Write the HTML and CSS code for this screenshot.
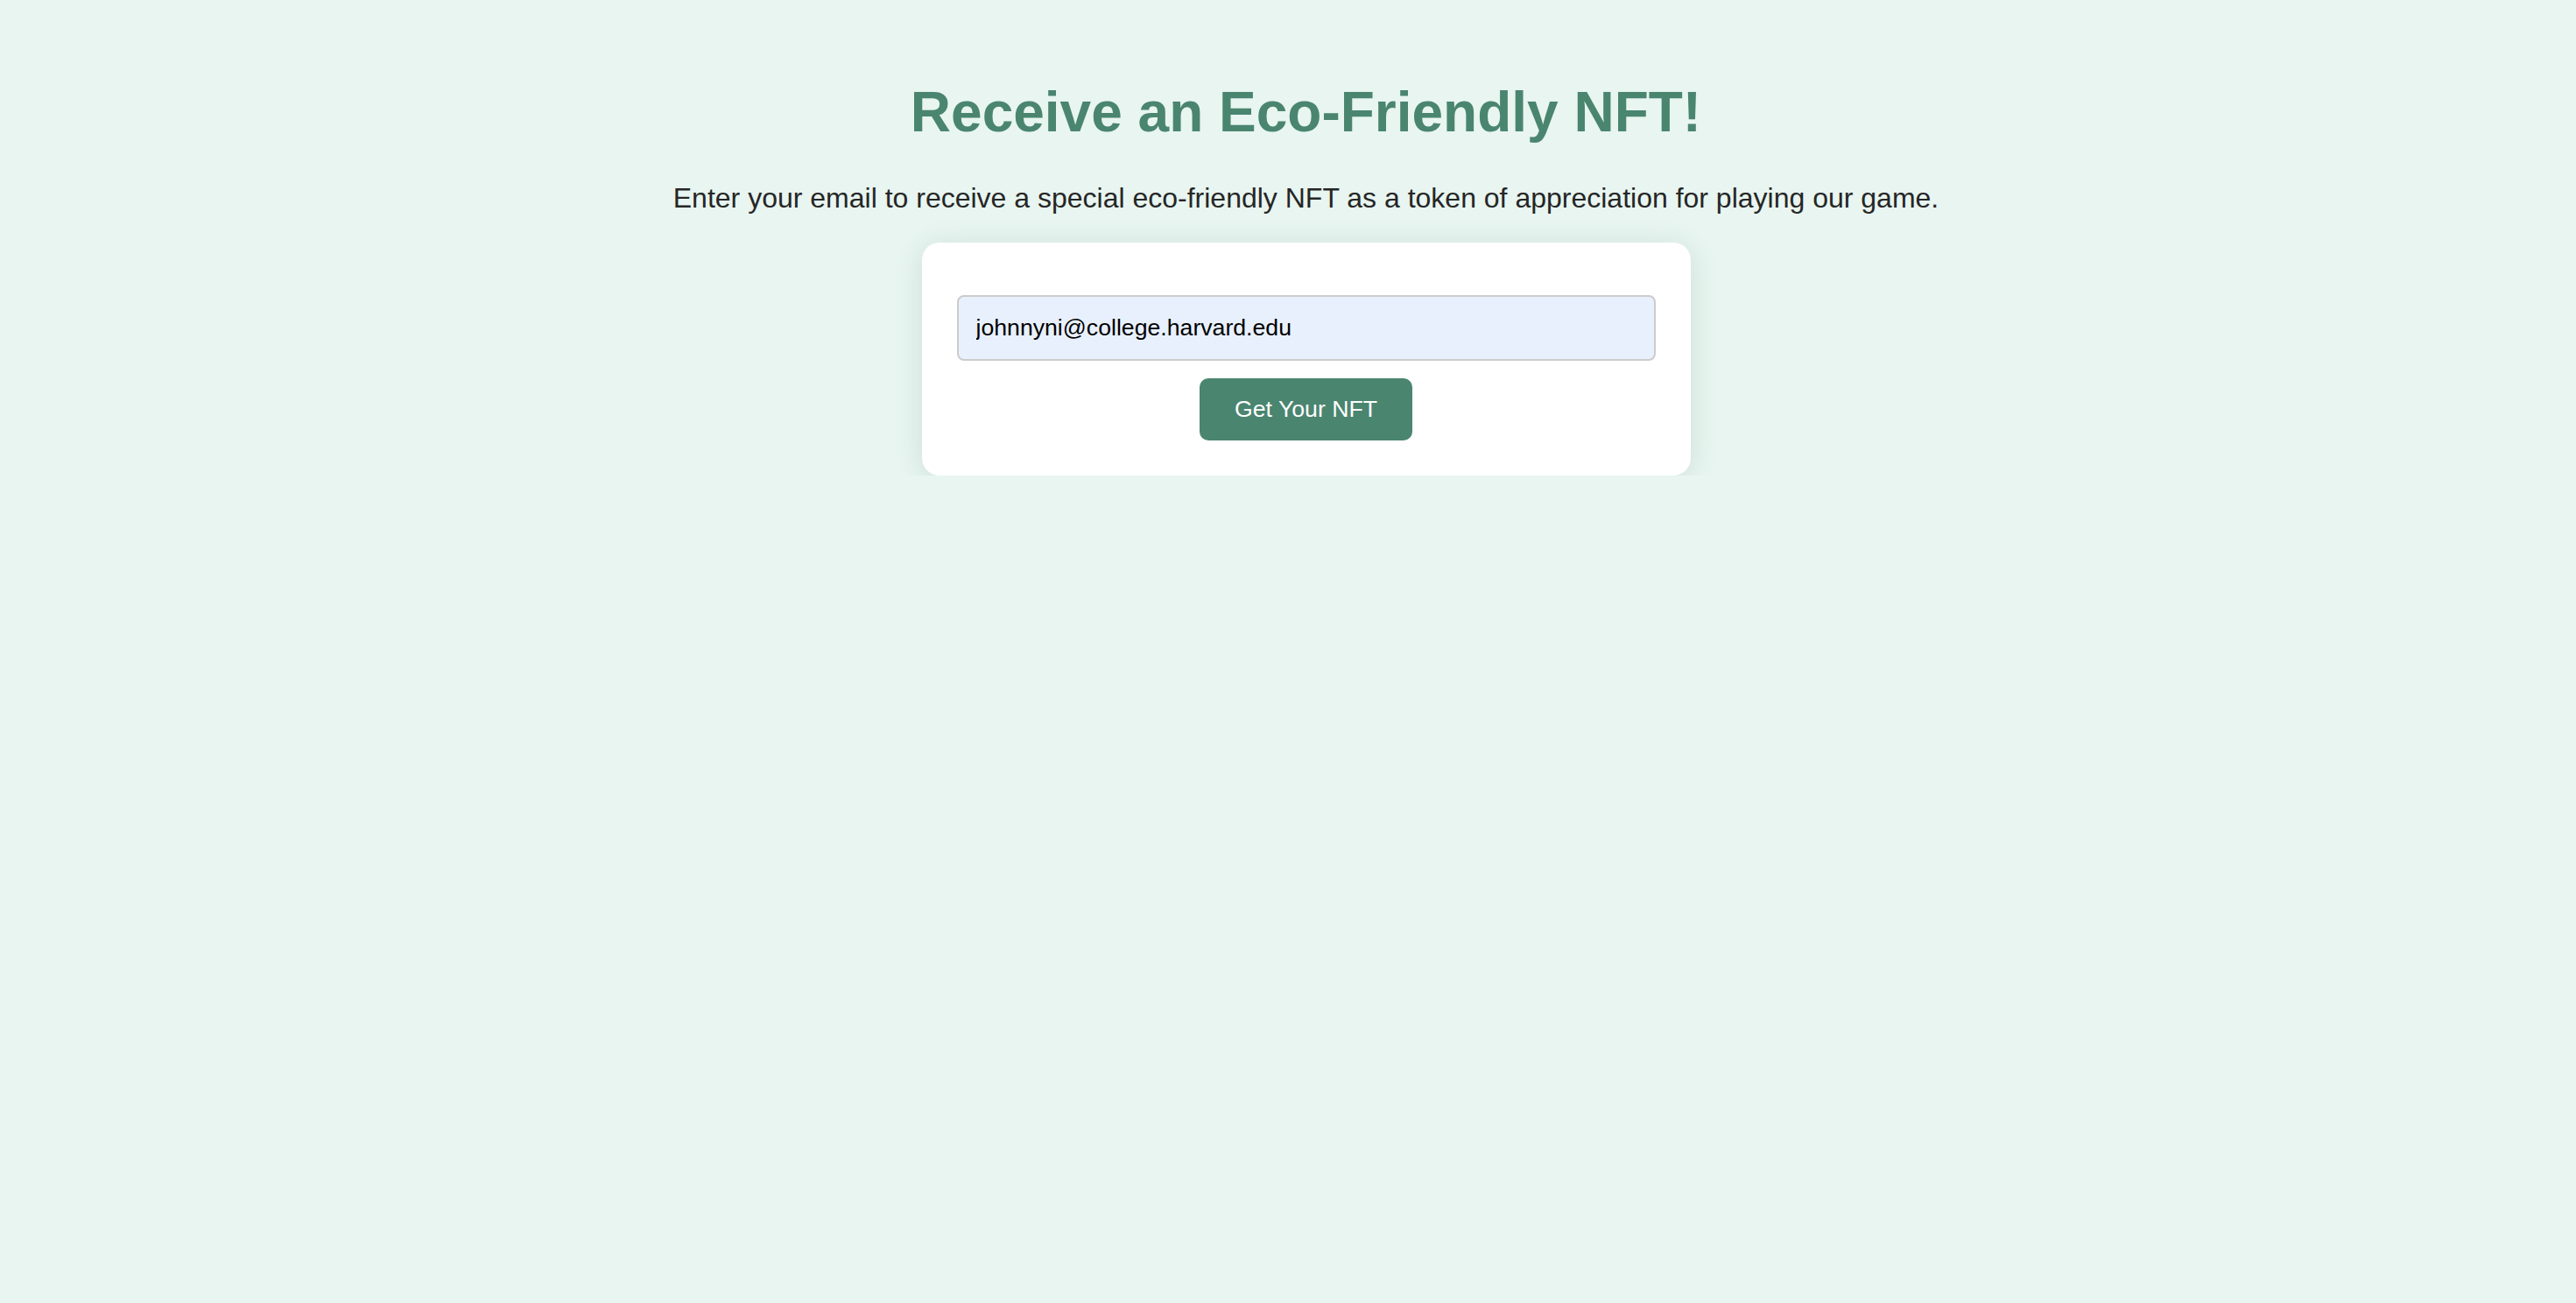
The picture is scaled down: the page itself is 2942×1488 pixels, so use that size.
FILE: index.html
```html
<!DOCTYPE html>
<html lang="en">
<head>
<meta charset="utf-8">
<title>Receive an Eco-Friendly NFT!</title>
<link rel="stylesheet" href="styles.css">
</head>
<body>
<main class="page">
  <h1 class="title">Receive an Eco-Friendly NFT!</h1>
  <p class="lead">Enter your email to receive a special eco-friendly NFT as a token of appreciation for playing our game.</p>
  <form class="card">
    <input class="email" type="email" value="johnnyni@college.harvard.edu">
    <button class="submit" type="button">Get Your NFT</button>
  </form>
</main>
</body>
</html>
```

FILE: styles.css
```css
html, body {
  margin: 0;
  padding: 0;
  background: #e8f5f0;
  min-height: 100%;
}
body {
  font-family: "Liberation Sans", Arial, sans-serif;
}
.page {
  display: flex;
  flex-direction: column;
  align-items: center;
  padding: 92px 0 0 41px;
  text-align: center;
}
.title {
  margin: 0 0 42px;
  font-size: 64px;
  line-height: 1.15;
  font-weight: bold;
  color: #4a8570;
}
.lead {
  margin: 0 0 33px;
  font-size: 32px;
  line-height: 1.15;
  color: #262626;
}
.card {
  box-sizing: border-box;
  width: 878px;
  padding: 60px 40px 40px;
  background: #ffffff;
  border-radius: 20px;
  box-shadow: 0 4px 30px rgba(60, 100, 85, 0.15);
  display: flex;
  flex-direction: column;
  align-items: center;
  gap: 20px;
}
.email {
  box-sizing: border-box;
  width: 100%;
  margin: 0;
  padding: 20px;
  font-family: "Liberation Sans", Arial, sans-serif;
  font-size: 26.67px;
  line-height: normal;
  color: #000000;
  background: #e8f0fe;
  border: 2px solid #cccccc;
  border-radius: 8px;
  outline: none;
}
.submit {
  margin: 0;
  padding: 20px 40px;
  font-family: "Liberation Sans", Arial, sans-serif;
  font-size: 26.67px;
  line-height: normal;
  color: #ffffff;
  background: #4a8570;
  border: none;
  border-radius: 10px;
  cursor: pointer;
}
```
